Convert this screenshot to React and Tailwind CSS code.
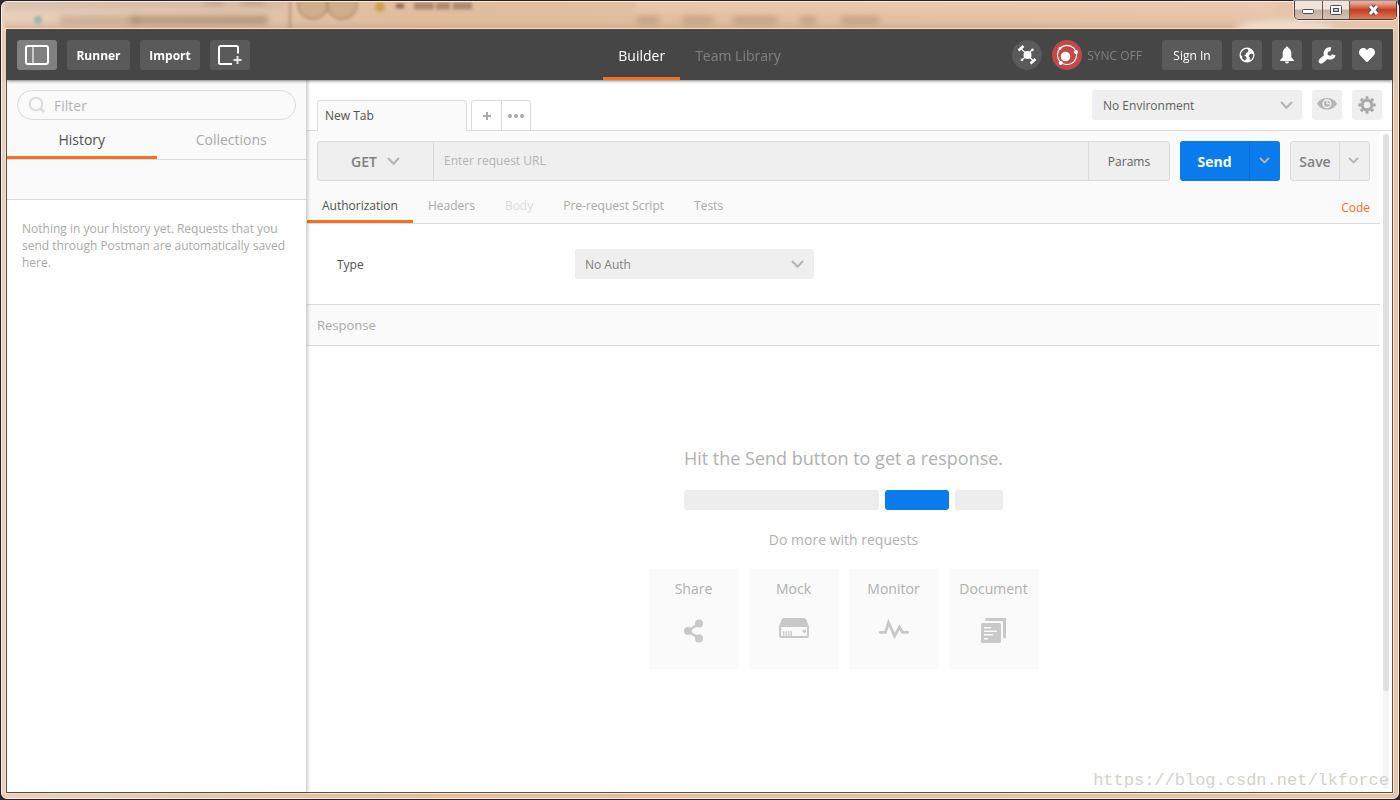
import { useState } from "react";
import { FaHeart } from "react-icons/fa";

const Chevron = ({ className }) => (
  <svg className={className} width="14" height="9" viewBox="0 0 14 9" fill="none">
    <path d="M1 1l5.500 5.800L12 1" stroke="currentColor" strokeWidth="2" />
  </svg>
);

const SmallChevron = () => (
  <svg className="mr-0.5 mb-0.5" width="11" height="7" viewBox="0 0 11 7" fill="none">
    <path d="M1 1l4.500 4.500L10 1" stroke="#b4b4b4" strokeWidth="1.800" />
  </svg>
);

const SidebarIcon = () => (
  <svg width="24" height="20" viewBox="0 0 24 20" fill="none" stroke="#fff">
    <rect x="1" y="1" width="22" height="18" rx="2" strokeWidth="2" />
    <path d="M8 2v16" stroke="#e4e4e4" strokeWidth="1.500" />
  </svg>
);

const NewWindowIcon = () => (
  <svg width="24" height="20" viewBox="0 0 24 20" fill="none" stroke="#fff" strokeWidth="2">
    <path d="M20 8.500V2.500Q20 1 18.500 1h-16Q1 1 1 2.500v15Q1 19 2.500 19H14" />
    <path d="M19.500 11v8M15.500 15h8" stroke="#e4e4e4" />
  </svg>
);

const SearchIcon = () => (
  <svg className="shrink-0" width="18" height="18" viewBox="0 0 18 18" fill="none" stroke="#dcdcdc">
    <circle cx="8" cy="8" r="6.300" strokeWidth="2" />
    <path d="M12.300 12.300l3.700 3.700" strokeWidth="3" />
  </svg>
);

const SatelliteIcon = () => (
  <svg width="20" height="20" viewBox="0 0 20 20" fill="#fff" stroke="#fff">
    <circle cx="10.500" cy="10" r="4" stroke="none" />
    <path d="M4.500 4l11.500 11.500M5 15l10-10" strokeWidth="1.200" />
    <path d="M1.500 5.500l5-4.500M13.500 18.500l5-4.500" strokeWidth="2.600" />
    <circle cx="5" cy="14.800" r=".9" />
    <circle cx="15.500" cy="4.800" r=".9" />
  </svg>
);

const SyncIcon = () => (
  <svg width="24" height="24" viewBox="0 0 24 24" fill="#fff">
    <circle cx="12" cy="12" r="9.600" fill="none" stroke="#fff" strokeWidth="1.100" />
    <circle cx="10.500" cy="13.500" r="4.800" />
    <circle cx="21" cy="9" r="2.100" />
    <circle cx="5.800" cy="20" r="2.100" />
    <circle cx="5" cy="5.500" r="1.400" />
  </svg>
);

const GlobeIcon = () => (
  <svg width="16" height="16" viewBox="0 0 16 16">
    <circle cx="8" cy="8" r="7.500" fill="#fff" />
    <path
      d="M5 2.500 8 1.700l1.500 1.500L9 5 7 6v1.500L5 8.500l2 1 .5 2L6 13.500 3.500 12 3 9 1.700 8l.5-2.500z"
      fill="#5a5a5a"
    />
    <path d="M10.500 7.500 12.500 6.500l1.800.8-.3 2.700-2 3-1.500-.5.3-2-1.300-1.200z" fill="#5a5a5a" />
  </svg>
);

const BellIcon = () => (
  <svg width="16" height="18" viewBox="0 0 16 18" fill="#fff">
    <path d="M8 0.500c1 0 1.300.8 1.300 1.600 2 .8 3 2.600 3 5v3.700c0 1.600 2.700 2.200 2.700 4.200H1c0-2 2.700-2.600 2.700-4.200V7.100c0-2.400 1-4.200 3-5C6.700 1.300 7 .5 8 .5z" />
    <path d="M6 15.500h4c0 1.200-.8 2-2 2s-2-.8-2-2z" />
  </svg>
);

const WrenchIcon = () => (
  <svg width="18" height="17" viewBox="0 0 18 17" fill="none" stroke="#fff">
    <path d="M12.800 2.300A4.200 4.200 0 1 0 15.800 7.800" strokeWidth="4" />
    <path d="M8.500 9.500 3.200 14" strokeWidth="5" />
    <circle cx="3" cy="14.200" r="2" fill="#fff" />
  </svg>
);

const EyeIcon = () => (
  <svg className="mb-0.5" width="20" height="14" viewBox="0 0 20 14">
    <path d="M0 6.700C2.200 3 5.500 1 10 1s7.800 2 10 5.700C17.800 10.400 14.500 12.500 10 12.500S2.200 10.400 0 6.700z" fill="#b4b4b4" />
    <circle cx="10" cy="6.700" r="3.800" fill="none" stroke="#efefef" strokeWidth="1.600" />
    <path d="M10 4v2.700h2.500" fill="none" stroke="#efefef" strokeWidth="1.300" />
  </svg>
);

const GearIcon = () => (
  <svg width="18" height="18" viewBox="0 0 18 18" stroke="#a9a9a9" fill="none">
    <circle cx="9" cy="9" r="4.800" strokeWidth="3" />
    {[0, 45, 90, 135].map((deg) => (
      <path
        key={deg}
        d="M9 .3v3.200M9 14.500v3.200"
        strokeWidth="3"
        transform={`rotate(${deg} 9 9)`}
      />
    ))}
  </svg>
);

const ShareIcon = () => (
  <svg width="30" height="30" viewBox="0 0 30 30" fill="#c8c8c8">
    <path d="M20 8.500 9 16l11 7.500" fill="none" stroke="#c8c8c8" strokeWidth="2.500" />
    <circle cx="9" cy="16" r="4" />
    <circle cx="20" cy="8.500" r="4" />
    <circle cx="20" cy="23.500" r="4" />
  </svg>
);

const MockIcon = () => (
  <svg width="30" height="30" viewBox="0 0 30 30" fill="#c8c8c8">
    <path d="M5 3h20q2 0 2.600 2L30 12H0l2.400-7Q3 3 5 3z" />
    <rect x="1" y="11" width="28" height="11" rx="1.500" fill="none" stroke="#c8c8c8" strokeWidth="2" />
    <path d="M4.700 16v5M7.200 16v5M9.700 16v5M12.200 16v5" stroke="#c8c8c8" strokeWidth="1.300" />
    <circle cx="25.300" cy="16.200" r="1.700" />
  </svg>
);

const MonitorIcon = () => (
  <svg width="30" height="30" viewBox="0 0 30 30" fill="none">
    <path
      d="M1.300 17.300h5.200L9.500 7.500l6 13.500 5-9 3 5.300h5.200"
      stroke="#c8c8c8"
      strokeWidth="2.800"
      strokeLinecap="round"
    />
  </svg>
);

const DocumentIcon = () => (
  <svg width="30" height="30" viewBox="0 0 30 30" fill="#c8c8c8">
    <rect x="2" y="8" width="20" height="20" rx="1.500" />
    <path d="M7.500 4.500h18v17.500" fill="none" stroke="#c8c8c8" strokeWidth="3" strokeLinecap="round" />
    <path d="M5 12.700h7M5 16.200h13M5 19.700h9M5 23.700h4" stroke="#fafafa" strokeWidth="1.500" />
  </svg>
);

const actions = [
  { name: "Share", icon: <ShareIcon /> },
  { name: "Mock", icon: <MockIcon /> },
  { name: "Monitor", icon: <MonitorIcon /> },
  { name: "Document", icon: <DocumentIcon /> },
];

const requestTabs = ["Authorization", "Headers", "Body", "Pre-request Script", "Tests"];

// Frosted glass title bar with the desktop showing through
const TitleBar = () => (
  <div className="h-[26px] shrink-0 overflow-hidden" aria-hidden="true">
    <svg className="h-full w-full">
      <filter id="glass" filterUnits="userSpaceOnUse" x="-50" y="-50" width="1500" height="130">
        <feGaussianBlur stdDeviation="3" />
      </filter>
      <filter id="glass-light" filterUnits="userSpaceOnUse" x="-50" y="-50" width="1500" height="130">
        <feGaussianBlur stdDeviation="1.800" />
      </filter>
      <g filter="url(#glass)">
        <rect x="-10" y="22" width="1290" height="14" fill="#cda583" opacity=".6" />
        <rect x="-20" y="-12" width="300" height="20" fill="#c7b3a6" opacity=".5" />
        <rect x="630" y="-10" width="640" height="20" fill="#eccbb1" opacity=".7" />
        <ellipse cx="1280" cy="28" rx="50" ry="10" fill="#efdccd" />
        <path d="M55 18h80" stroke="#a98a72" strokeWidth="7" opacity=".5" />
        <path d="M125 18h138" stroke="#94755c" strokeWidth="8" opacity=".6" />
        <path d="M200 0h18M236 0h24" stroke="#a08470" strokeWidth="5" opacity=".6" />
        <path d="M632 18h22M678 18h30M728 18h44M795 18h16M836 18h38" stroke="#a8876d" strokeWidth="8" opacity=".5" />
      </g>
      <g filter="url(#glass-light)">
        <circle cx="33" cy="18" r="4" fill="#9db3ab" />
        <path d="M285 -5v40" stroke="#b08c6b" strokeWidth="2.500" opacity=".7" />
        <circle cx="308" cy="2" r="15" fill="#c6a584" stroke="#a3835f" strokeWidth="2" opacity=".7" />
        <circle cx="337" cy="2" r="15" fill="#c6a584" stroke="#a3835f" strokeWidth="2" opacity=".7" />
        <circle cx="375" cy="5" r="5" fill="#cba24d" />
        <path d="M391 4h8" stroke="#8f705a" strokeWidth="5" />
        <path d="M409 4h58" stroke="#94765f" strokeWidth="7" strokeDasharray="20 2 14 3 20" opacity=".7" />
      </g>
    </svg>
  </div>
);

const WindowControls = () => (
  <div className="absolute top-0 right-[2px] flex h-[19px] overflow-hidden rounded-b-[5px] border border-t-0 border-[#4c3f3a] shadow-[0_0_0_1px_rgba(255,255,255,0.5)]">
    <button
      aria-label="Minimize"
      className="flex w-7 items-center justify-center border-r border-[#6b5a50] bg-linear-to-b from-[#f0e3da] from-45% via-[#c3aea0] via-50% to-[#d5c3b6] pt-1"
    >
      <svg width="13" height="6" viewBox="0 0 13 6">
        <rect x=".5" y=".5" width="11" height="4" rx="1" fill="#fff" stroke="#4b4b5b" />
      </svg>
    </button>
    <button
      aria-label="Maximize"
      className="flex w-[27px] items-center justify-center border-r border-[#6b5a50] bg-linear-to-b from-[#f0e3da] from-45% via-[#c3aea0] via-50% to-[#d5c3b6]"
    >
      <svg width="12" height="11" viewBox="0 0 12 11">
        <rect x=".5" y=".5" width="11" height="9" rx="1" fill="#fff" stroke="#4b4b5b" />
        <rect x="3.500" y="3.500" width="5" height="3" fill="#d4c0b2" stroke="#4b4b5b" />
      </svg>
    </button>
    <button
      aria-label="Close"
      className="flex w-[46px] items-center justify-center bg-linear-to-b from-[#e9a896] from-10% via-[#c23c20] via-50% to-[#dd7a5c]"
    >
      <svg width="13" height="12" viewBox="0 0 13 12">
        <path d="M3 2l7 8M10 2l-7 8" stroke="#4b4b5b" strokeWidth="5" />
        <path d="M3 2l7 8M10 2l-7 8" stroke="#fff" strokeWidth="3" />
      </svg>
    </button>
  </div>
);

const Header = () => {
  const iconButton = "flex size-[30px] items-center justify-center rounded-[3px] bg-[#5a5a5a] text-white";

  return (
    <header className="relative z-20 grid h-[50px] shrink-0 grid-cols-[1fr_auto_1fr] items-center bg-[#464646] px-2.5 shadow-[0_1px_3px_rgba(0,0,0,0.5)]">
      <div className="flex gap-2.5 text-xs font-bold text-white">
        <button aria-label="Toggle sidebar" className="flex h-[30px] w-10 items-center justify-center rounded-[3px] bg-[#808080]">
          <SidebarIcon />
        </button>
        <button className="h-[30px] w-[63px] rounded-[3px] bg-[#5a5a5a] pt-0.5">Runner</button>
        <button className="h-[30px] w-[60px] rounded-[3px] bg-[#5a5a5a] pt-0.5">Import</button>
        <button aria-label="New window" className="flex h-[30px] w-10 items-center justify-center rounded-[3px] bg-[#5a5a5a]">
          <NewWindowIcon />
        </button>
      </div>
      <nav className="flex h-full text-sm">
        <a href="#builder" className="flex items-center border-b-3 border-[#f47023] px-[15px] pt-1 text-white">
          Builder
        </a>
        <a href="#library" className="flex items-center border-b-3 border-transparent px-[15px] pt-1 text-[#808080]">
          Team Library
        </a>
      </nav>
      <div className="flex items-center justify-end gap-2.5">
        <button aria-label="Interceptor" className="flex size-[30px] items-center justify-center rounded-full bg-[#5a5a5a]">
          <SatelliteIcon />
        </button>
        <button className="mr-2.5 flex items-center gap-[5px] text-xs text-[#808080]">
          <span className="flex size-[30px] items-center justify-center rounded-full bg-[#c04a48]">
            <SyncIcon />
          </span>
          <span className="pt-0.5">SYNC OFF</span>
        </button>
        <button className="h-[30px] w-[60px] rounded-[3px] bg-[#5a5a5a] pt-0.5 text-xs text-white">Sign In</button>
        <button aria-label="Browse" className={iconButton}>
          <GlobeIcon />
        </button>
        <button aria-label="Notifications" className={iconButton}>
          <BellIcon />
        </button>
        <button aria-label="Settings" className={iconButton}>
          <WrenchIcon />
        </button>
        <button aria-label="Love" className={iconButton}>
          <FaHeart size={16} />
        </button>
      </div>
    </header>
  );
};

const Sidebar = () => {
  const [filter, setFilter] = useState("");

  return (
    <aside className="relative z-10 flex w-[300px] shrink-0 flex-col border-r border-[#d4d4d4] bg-white shadow-[1px_0_3px_rgba(0,0,0,0.2)]">
      <div className="bg-[#fafafa] px-2.5 pt-2.5">
        <label className="flex h-[30px] items-center gap-2 rounded-full border border-[#dbdbdb] px-2.5">
          <SearchIcon />
          <input
            aria-label="Filter"
            placeholder="Filter"
            value={filter}
            onChange={(e) => setFilter(e.target.value)}
            className="w-full bg-transparent pt-0.5 text-sm outline-none placeholder:text-[#b4b4b4]"
          />
        </label>
      </div>
      <div className="flex h-10 border-b border-[#dbdbdb] bg-[#fafafa] text-sm">
        <button className="flex-1 border-b-3 border-[#f47023] pt-1 text-[#505050]">History</button>
        <button className="flex-1 border-b-3 border-transparent pt-1 text-[#a9a9a9]">Collections</button>
      </div>
      <div className="h-10 border-b border-[#dbdbdb] bg-[#fafafa]" />
      <p className="px-[15px] py-5 text-xs leading-[17px] text-[#a9a9a9]">
        Nothing in your history yet. Requests that you send through Postman are automatically saved here.
      </p>
    </aside>
  );
};

const TabBar = () => (
  <div className="flex h-[51px] shrink-0 justify-between border-b border-[#dbdbdb] px-2.5">
    <div className="-mb-px flex items-end">
      <button className="mr-1 h-[31px] w-[150px] rounded-t-[3px] border border-b-0 border-[#dbdbdb] bg-[#fafafa] px-[7px] text-left text-xs text-[#505050]">
        New Tab
      </button>
      <div className="flex h-[31px] rounded-t-[3px] border border-[#dbdbdb]">
        <button aria-label="Add tab" className="flex w-[30px] items-center justify-center border-r border-[#dbdbdb]">
          <svg width="10" height="10" viewBox="0 0 10 10" stroke="#a9a9a9" strokeWidth="2">
            <path d="M5 1v8M1 5h8" />
          </svg>
        </button>
        <button aria-label="Tab options" className="flex w-7 items-center justify-center">
          <svg width="16" height="4" viewBox="0 0 16 4" fill="#a9a9a9">
            <circle cx="2" cy="2" r="2" />
            <circle cx="8" cy="2" r="2" />
            <circle cx="14" cy="2" r="2" />
          </svg>
        </button>
      </div>
    </div>
    <div className="flex gap-2.5 pt-2.5">
      <div className="relative h-[30px] w-[210px]">
        <select
          aria-label="Environment"
          className="h-full w-full appearance-none rounded-[3px] bg-[#efefef] px-[11px] pt-0.5 text-xs text-[#606060] outline-none"
        >
          <option>No Environment</option>
        </select>
        <Chevron className="pointer-events-none absolute top-[11px] right-2 text-[#b4b4b4]" />
      </div>
      <button aria-label="Quick look" className="flex size-[30px] items-center justify-center rounded-[3px] bg-[#efefef]">
        <EyeIcon />
      </button>
      <button aria-label="Manage environments" className="flex size-[30px] items-center justify-center rounded-[3px] bg-[#efefef]">
        <GearIcon />
      </button>
    </div>
  </div>
);

const RequestBar = () => {
  const [url, setUrl] = useState("");

  return (
    <div className="flex h-[60px] gap-2.5 p-2.5">
      <div className="flex flex-1 rounded-[3px] border border-[#dbdbdb] bg-[#efefef]">
        <div className="relative w-[116px] border-r border-[#dbdbdb]">
          <select
            aria-label="Method"
            className="h-full w-full appearance-none bg-transparent pt-0.5 pl-[33px] text-sm font-semibold text-[#808080] outline-none"
          >
            <option>GET</option>
          </select>
          <Chevron className="pointer-events-none absolute top-[15px] right-8 text-[#b4b4b4]" />
        </div>
        <input
          aria-label="Request URL"
          placeholder="Enter request URL"
          value={url}
          onChange={(e) => setUrl(e.target.value)}
          className="min-w-0 flex-1 bg-transparent px-2.5 text-xs outline-none placeholder:text-[#b4b4b4]"
        />
        <button className="w-[81px] border-l border-[#dbdbdb] pt-0.5 text-xs text-[#606060]">Params</button>
      </div>
      <div className="flex w-[100px] overflow-hidden rounded-[3px] bg-[#097bed]">
        <button className="flex-1 pt-0.5 text-sm font-bold text-white">Send</button>
        <button aria-label="Send options" className="flex w-[31px] items-center justify-center border-l border-[#0b6bce]">
          <SmallChevron />
        </button>
      </div>
      <div className="flex w-20 rounded-[3px] border border-[#dbdbdb] bg-[#efefef]">
        <button className="flex-1 pt-0.5 text-sm font-semibold text-[#808080]">Save</button>
        <button aria-label="Save options" className="flex w-[30px] items-center justify-center border-l border-[#dbdbdb]">
          <SmallChevron />
        </button>
      </div>
    </div>
  );
};

const RequestTabs = () => {
  const [active, setActive] = useState("Authorization");

  const tabColor = (tab) => {
    if (tab === active) return "border-[#f47023] text-[#505050]";
    if (tab === "Body") return "border-transparent text-[#dbdbdb]";
    return "border-transparent text-[#a9a9a9]";
  };

  return (
    <div className="flex h-[43px] -mt-2.5 justify-between border-b border-[#dbdbdb] pt-2.5 pr-2.5 text-xs">
      <div className="flex">
        {requestTabs.map((tab) => (
          <button
            key={tab}
            disabled={tab === "Body"}
            onClick={() => setActive(tab)}
            className={`border-b-3 px-[15px] ${tabColor(tab)}`}
          >
            {tab}
          </button>
        ))}
      </div>
      <a href="#code" className="flex items-center pt-0.5 text-[#f47023]">
        Code
      </a>
    </div>
  );
};

const ResponseEmpty = () => (
  <div className="flex flex-col items-center pt-[100px] text-sm text-[#b0b0b0]">
    <p className="text-lg leading-6">Hit the Send button to get a response.</p>
    <div className="mt-5 flex h-5 gap-1.5">
      <div className="w-[195px] rounded-[3px] bg-[#ededed]" />
      <div className="w-16 rounded-[3px] bg-[#097bed]" />
      <div className="w-12 rounded-[3px] bg-[#ededed]" />
    </div>
    <p className="mt-5 leading-5">Do more with requests</p>
    <div className="mt-[19px] flex gap-2.5">
      {actions.map((action) => (
        <button key={action.name} className="flex h-[100px] w-[90px] flex-col items-center gap-4 bg-[#fafafa] pt-2.5">
          <span className="leading-5">{action.name}</span>
          {action.icon}
        </button>
      ))}
    </div>
  </div>
);

const Builder = () => (
  <main className="flex min-w-0 flex-1 flex-col bg-white">
    <TabBar />
    <div className="flex flex-1">
      <div className="min-w-0 flex-1">
        <section className="bg-[#fafafa]">
          <RequestBar />
          <RequestTabs />
        </section>
        <section className="flex h-20 items-center px-[30px] text-xs">
          <label htmlFor="auth-type" className="w-[238px] pt-0.5 text-[#505050]">
            Type
          </label>
          <div className="relative h-[30px] w-[239px]">
            <select
              id="auth-type"
              className="h-full w-full appearance-none rounded-[3px] bg-[#efefef] px-2.5 pt-0.5 text-[#808080] outline-none"
            >
              <option>No Auth</option>
            </select>
            <Chevron className="pointer-events-none absolute top-[11px] right-[9px] text-[#b4b4b4]" />
          </div>
        </section>
        <h2 className="flex h-[42px] items-center border-y border-[#dbdbdb] bg-[#fafafa] px-2.5 pt-0.5 text-[13px] text-[#a9a9a9]">
          Response
        </h2>
        <ResponseEmpty />
      </div>
      <div className="flex w-3 flex-col p-[3px]">
        <div className="flex flex-1 flex-col rounded-full bg-[#f5f5f5]">
          <div className="h-[85%] rounded-full bg-[#e1e1e1]" />
        </div>
      </div>
    </div>
  </main>
);

const App = () => {
  return (
    <div className="min-h-screen bg-[#2b2b2b] font-['Open_Sans',sans-serif]">
      <div className="relative flex min-h-screen flex-col rounded-[7px] border border-[#2b2122]">
        <div className="flex flex-1 flex-col rounded-[6px] border border-[#fbeee3] bg-linear-to-r from-[#e9d0be] via-[#e0bd9d] via-30% to-[#e6c6ab] pr-1 pb-1 pl-[3px]">
          <TitleBar />
          <div className="flex flex-1 flex-col border border-[#f7e6d6]">
            <div className="flex flex-1 flex-col border border-[#5c5142]">
              <Header />
              <div className="flex flex-1">
                <Sidebar />
                <Builder />
              </div>
            </div>
          </div>
        </div>
        <WindowControls />
        <p className="pointer-events-none absolute right-2.5 bottom-1.5 z-20 font-['Liberation_Mono',monospace] text-[17px] leading-6 text-[#d2d2cc]">
          https://blog.csdn.net/lkforce
        </p>
      </div>
    </div>
  );
};

export default App;
